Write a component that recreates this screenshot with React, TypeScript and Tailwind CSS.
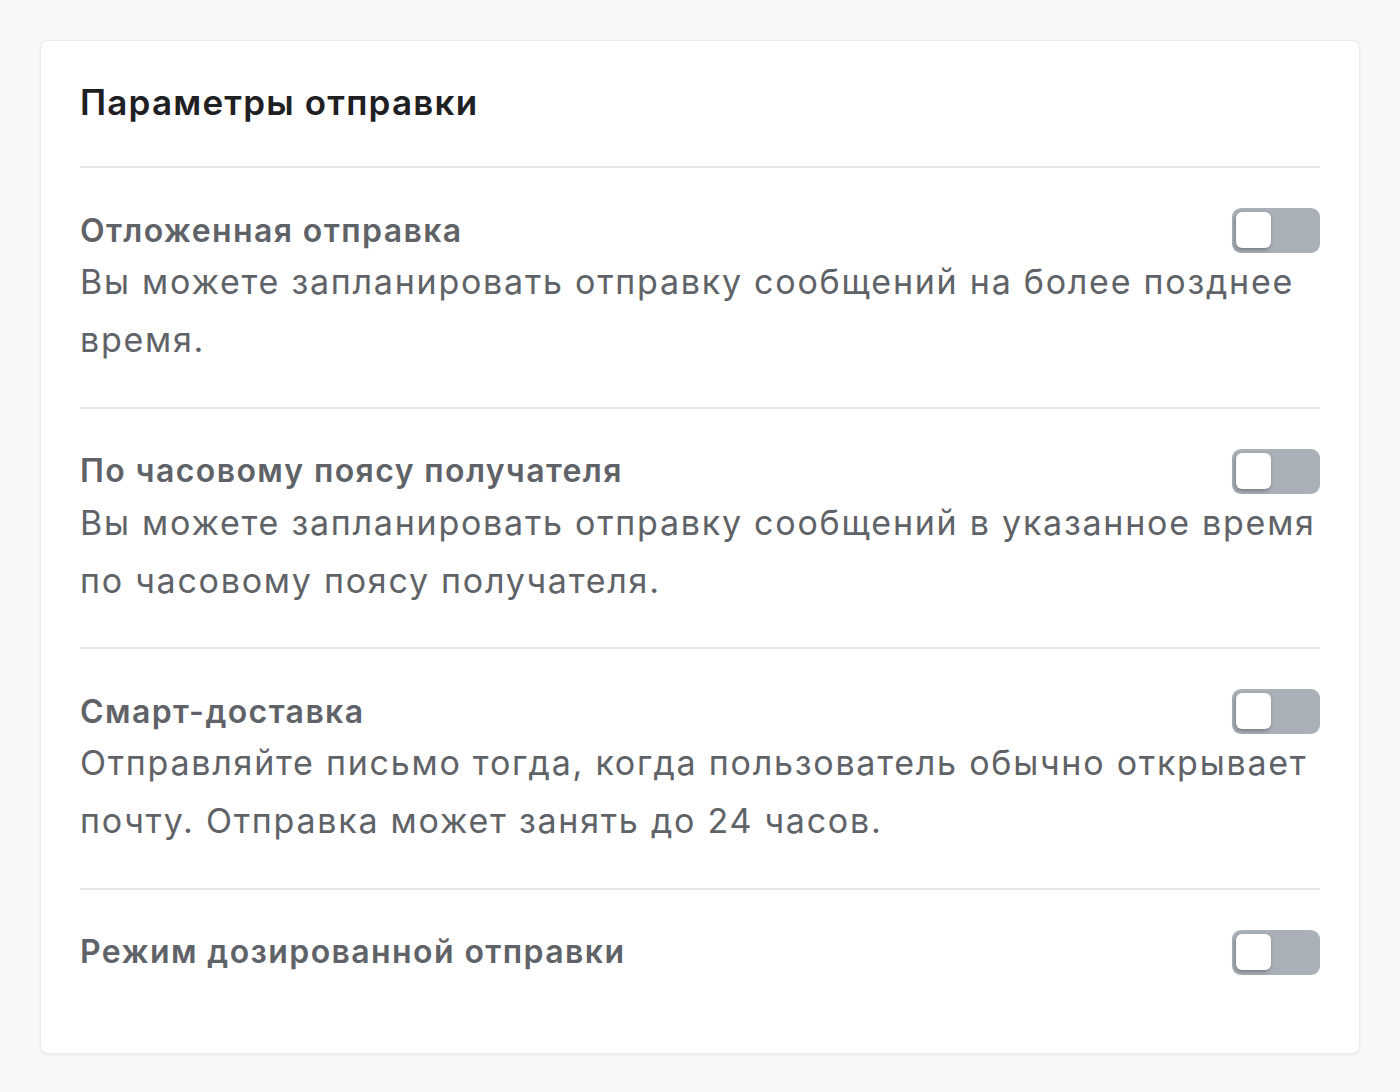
const options = [
  {
    title: "Отложенная отправка",
    text: "Вы можете запланировать отправку сообщений на более позднее время.",
  },
  {
    title: "По часовому поясу получателя",
    text: "Вы можете запланировать отправку сообщений в указанное время по часовому поясу получателя.",
  },
  {
    title: "Смарт-доставка",
    text: "Отправляйте письмо тогда, когда пользователь обычно открывает почту. Отправка может занять до 24 часов.",
  },
  {
    title: "Режим дозированной отправки",
    text: "",
  },
];

const Toggle = () => (
  <button
    type="button"
    className="relative h-[45px] w-[88px] shrink-0 rounded-[9px] bg-[#a9b0b8]"
  >
    <span className="absolute left-[4px] top-[4px] h-[36px] w-[35px] rounded-[6px] bg-white shadow-[-1px_2px_4px_rgba(0,0,0,0.3)]" />
  </button>
);

export default function App() {
  return (
    <div
      className="min-h-[1092px] bg-[#f8f8f8] p-[40px] pb-[39px]"
      style={{ fontFamily: "Inter, 'Noto Sans', sans-serif" }}
    >
      <div className="rounded-[8px] border border-[#ececec] bg-white px-[39px] pt-[39px] pb-[41px] shadow-[0_1px_3px_rgba(0,0,0,0.08)]">
        <h2 className="pb-[42px] text-[35px] font-semibold leading-[44px] tracking-[1.2px] text-[#1f2023]">
          Параметры отправки
        </h2>
        <div className="divide-y-2 divide-[#e6e6e6] border-t-2 border-[#e6e6e6]">
          {options.map((o) => (
            <div key={o.title} className="pt-[40px] pb-[37.5px]">
              <div className="flex items-center justify-between gap-6">
                <div className="text-[32px] font-semibold leading-[44px] tracking-[1.4px] text-[#5f6368]">
                  {o.title}
                </div>
                <Toggle />
              </div>
              {o.text && (
                <p className="text-[34px] leading-[58px] tracking-[1.75px] text-[#5f6368]">
                  {o.text}
                </p>
              )}
            </div>
          ))}
        </div>
      </div>
    </div>
  );
}
